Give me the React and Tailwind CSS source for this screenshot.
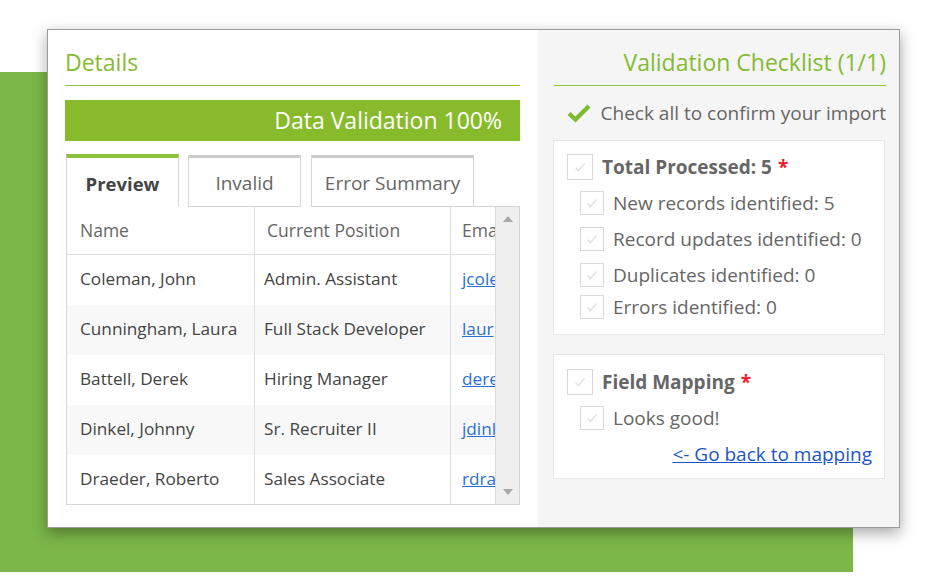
import React from "react";

const font = { fontFamily: '"Open Sans", "Noto Sans", sans-serif' };

function Box({ big }) {
  return (
    <div
      className={`flex items-center justify-center border border-[#d9d9d9] bg-white shrink-0 ${
        big ? "w-[26px] h-[26px]" : "w-[24px] h-[24px]"
      }`}
    >
      <svg width="14" height="14" viewBox="0 0 14 14" fill="none">
        <path d="M2.5 7.5 L5.5 10.5 L11.5 3.5" stroke="#e3e3e3" strokeWidth="1.6" />
      </svg>
    </div>
  );
}

const rows = [
  ["Coleman, John", "Admin. Assistant", "jcole"],
  ["Cunningham, Laura", "Full Stack Developer", "laur"],
  ["Battell, Derek", "Hiring Manager", "dere"],
  ["Dinkel, Johnny", "Sr. Recruiter II", "jdinl"],
  ["Draeder, Roberto", "Sales Associate", "rdra"],
];

export default function App() {
  return (
    <div className="relative w-[941px] h-[579px] bg-white overflow-hidden" style={font}>
      <div className="mt-[72px] w-[853px] h-[500px] bg-[#7cb74a]" />
      <div className="absolute left-[47px] top-[29px] w-[853px] h-[499px] border border-[#9c9c9c] bg-white shadow-[0_5px_14px_rgba(0,0,0,0.35)] flex">
        {/* Left */}
        <div className="w-[490px] pl-[17px] pr-[18px] bg-white">
          <div className="pt-[14px] h-[56px] border-b border-[#8fc43c] text-[23px] leading-[36px] text-[#84bb33]">
            Details
          </div>
          <div className="mt-[14px] h-[41px] bg-[#88bb2b] text-white text-[23px] flex items-center justify-end pr-[18px]">
            Data Validation 100%
          </div>
          <div className="mt-[13px] flex items-end h-[53px] pl-[1px]">
            <div className="w-[113px] h-[53px] pt-[2px] border-t-4 border-t-[#8cc23a] border-x border-x-[#d6d6d6] bg-white flex items-center justify-center text-[18.5px] font-bold text-[#444]">
              Preview
            </div>
            <div className="ml-[9px] w-[113px] h-[52px] pt-[2px] border-t-[3px] border-t-[#cdcdcd] border-x border-b border-[#d6d6d6] bg-white flex items-center justify-center text-[19px] text-[#666]">
              Invalid
            </div>
            <div className="ml-[10px] w-[163px] h-[52px] pt-[2px] border-t-[3px] border-t-[#cdcdcd] border-x border-b border-[#d6d6d6] bg-white flex items-center justify-center text-[19px] text-[#666]">
              Error Summary
            </div>
            <div className="flex-1 border-b border-[#d6d6d6]" />
          </div>
          <div className="ml-[1px] h-[298px] border-x border-b border-[#d6d6d6] flex">
            <div className="flex-1 overflow-hidden">
              <div className="flex h-[48px] border-b border-[#dedede] text-[17.5px] text-[#666] items-center">
                <div className="w-[188px] h-full border-r border-[#dedede] flex items-center pl-[13px]">Name</div>
                <div className="w-[196px] h-full border-r border-[#dedede] flex items-center pl-[12px] whitespace-nowrap">Current Position</div>
                <div className="flex-1 h-full flex items-center pl-[11px] overflow-hidden whitespace-nowrap">Email</div>
              </div>
              {rows.map((r, i) => (
                <div
                  key={i}
                  className={`flex h-[50px] text-[17.2px] text-[#444] ${i % 2 === 1 ? "bg-[#f8f8f8]" : "bg-white"}`}
                >
                  <div className="w-[188px] h-full border-r border-[#dedede] flex items-center pl-[13px] pb-[2px] whitespace-nowrap">{r[0]}</div>
                  <div className="w-[196px] h-full border-r border-[#dedede] flex items-center pl-[9px] pb-[2px] whitespace-nowrap">{r[1]}</div>
                  <div className="flex-1 h-full flex items-center pl-[11px] pb-[2px] overflow-hidden whitespace-nowrap">
                    <span className="text-[#2a6fd8] underline">{r[2]}</span>
                  </div>
                </div>
              ))}
            </div>
            <div className="w-[24px] bg-[#efefef] border-l border-[#dcdcdc] flex flex-col items-center justify-between py-[9px]">
              <svg width="10" height="6" viewBox="0 0 10 6"><path d="M0 6 L5 0 L10 6 Z" fill="#a8a8a8" /></svg>
              <svg width="10" height="6" viewBox="0 0 10 6"><path d="M0 0 L5 6 L10 0 Z" fill="#a8a8a8" /></svg>
            </div>
          </div>
        </div>
        {/* Right */}
        <div className="flex-1 bg-[#f5f5f5] pl-[15px] pr-[13px]">
          <div className="ml-[1px] pt-[14px] h-[56px] border-b border-[#8fc43c] text-[23px] leading-[36px] text-[#84bb33] text-right">
            Validation Checklist (1/1)
          </div>
          <div className="mt-[12px] flex items-center justify-end gap-[10px] text-[19px] text-[#666] h-[30px]">
            <svg width="24" height="20" viewBox="0 0 24 20">
              <path d="M2 10.5 L8.5 16.5 L22 3" stroke="#7fba2f" strokeWidth="4.4" fill="none" />
            </svg>
            <span>Check all to confirm your import</span>
          </div>
          <div className="mt-[12px] mr-[1px] h-[195px] bg-white border border-[#e6e6e6] pl-[13px] pt-[13px]">
            <div className="flex items-center gap-[9px] h-[26px]">
              <Box big />
              <span className="text-[19px] font-bold text-[#666]">Total Processed: 5</span>
              <span className="text-[19px] font-bold text-[#f01d2f] -ml-[3px]">*</span>
            </div>
            <div className="pl-[13px] mt-[11px] flex flex-col text-[19px] text-[#666]">
              {["New records identified: 5", "Record updates identified: 0", "Duplicates identified: 0", "Errors identified: 0"].map(
                (t, i) => (
                  <div key={t} className={`flex items-center gap-[9px] h-[24px] ${i === 0 ? "" : i === 3 ? "mt-[8px]" : "mt-[12px]"}`}>
                    <Box />
                    <span>{t}</span>
                  </div>
                )
              )}
            </div>
          </div>
          <div className="mt-[19px] mr-[1px] h-[125px] bg-white border border-[#e6e6e6] pl-[13px] pr-[12px] pt-[14px]">
            <div className="flex items-center gap-[9px] h-[26px]">
              <Box big />
              <span className="text-[19px] font-bold text-[#666]">Field Mapping</span>
              <span className="text-[19px] font-bold text-[#f01d2f] -ml-[3px]">*</span>
            </div>
            <div className="pl-[13px] mt-[11px] flex items-center gap-[9px] h-[24px] text-[19px] text-[#666]">
              <Box />
              <span>Looks good!</span>
            </div>
            <div className="mt-[12px] text-right text-[19px] leading-[24px]">
              <span className="text-[#1d55c7] underline">&lt;- Go back to mapping</span>
            </div>
          </div>
        </div>
      </div>
    </div>
  );
}
